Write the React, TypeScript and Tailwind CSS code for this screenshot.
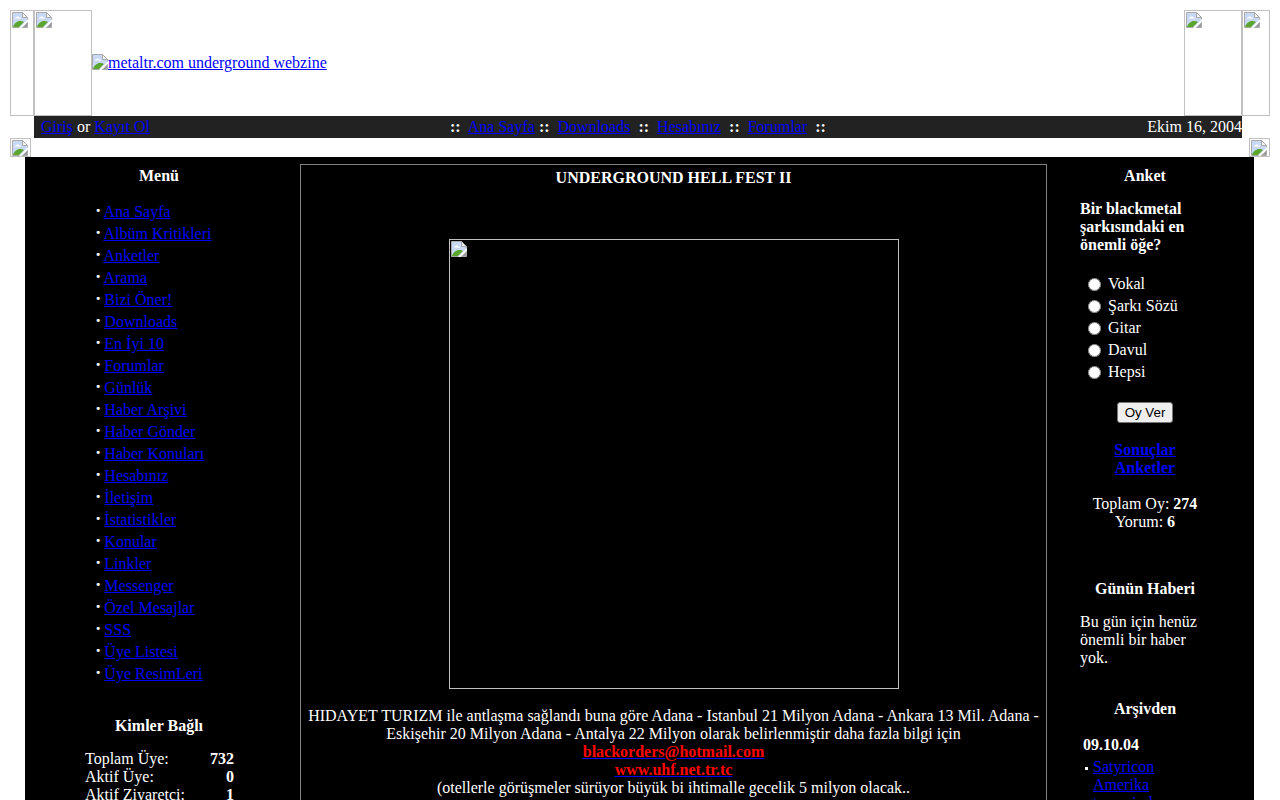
const MENU = [
  "Ana Sayfa",
  "Albüm Kritikleri",
  "Anketler",
  "Arama",
  "Bizi Öner!",
  "Downloads",
  "En İyi 10",
  "Forumlar",
  "Günlük",
  "Haber Arşivi",
  "Haber Gönder",
  "Haber Konuları",
  "Hesabınız",
  "İletişim",
  "İstatistikler",
  "Konular",
  "Linkler",
  "Messenger",
  "Özel Mesajlar",
  "SSS",
  "Üye Listesi",
  "Üye ResimLeri",
];

const POLL = ["Vokal", "Şarkı Sözü", "Gitar", "Davul", "Hepsi"];

const STATS = [
  ["Toplam Üye:", "732"],
  ["Aktif Üye:", "0"],
  ["Aktif Ziyaretçi:", "1"],
];

function BrokenIcon({ className = "" }: { className?: string }) {
  return (
    <svg width="16" height="16" viewBox="0 0 16 16" className={`shrink-0 block ${className}`}>
      <path d="M0.5 0.5H10.5L15.5 5.5V15.5H0.5Z" fill="#c9d9f5" stroke="#a9a9a9" />
      <path d="M10.5 0.5V5.5H15.5Z" fill="#f4f4f4" stroke="#a9a9a9" />
      <path d="M4 5.5C4.5 4 7 4 7.5 5.5H9V6.5H3V5.5Z" fill="#ffffff" />
      <path d="M1 15C2 11.5 5 9 8 9C10 9 11.5 9.5 12 10L7 15Z" fill="#5aa62e" />
      <path d="M7 16L16 7V9.5L9.5 16Z" fill="#ffffff" />
      <path d="M11 15L15 11V15Z" fill="#9a9a9a" />
    </svg>
  );
}

function BrokenBox({ className }: { className: string }) {
  return (
    <div className={`shrink-0 border border-[#c0c0c0] pt-[1px] pl-[1px] ${className}`}>
      <BrokenIcon />
    </div>
  );
}

function A({ children, className = "" }: { children: React.ReactNode; className?: string }) {
  return <a href="#" className={`text-[#0000ff] underline ${className}`}>{children}</a>;
}

function Sep() {
  return <b className="text-white">::</b>;
}

export default function App() {
  return (
    <div className="h-[800px] overflow-hidden bg-white pt-[10px] px-[10px] font-['Liberation_Serif',serif] text-[16px] leading-[18px] text-white">
      <div className="flex h-[106px] items-center">
        <BrokenBox className="self-stretch w-[24px]" />
        <BrokenBox className="self-stretch w-[58px]" />
        <a href="#" className="flex items-center text-[#0000ff] underline">
          <BrokenIcon className="mb-[2px]" />
          metaltr.com underground webzine
        </a>
        <div className="flex-1" />
        <BrokenBox className="self-stretch w-[58px]" />
        <BrokenBox className="self-stretch w-[28px]" />
      </div>

      <div className="ml-[24px] mr-[28px] flex h-[22px] items-center bg-[#222222] pl-[7px]">
        <div className="w-[409px]">
          <A>Giriş</A> or <A>Kayıt Ol</A>
        </div>
        <div className="flex-1 whitespace-pre">
          <Sep />{"  "}<A>Ana Sayfa</A>{" "}<Sep />{"  "}<A>Downloads</A>{"  "}<Sep />{"  "}<A>Hesabınız</A>{"  "}<Sep />{"  "}<A>Forumlar</A>{"  "}<Sep />
        </div>
        <div>Ekim 16, 2004</div>
      </div>

      <div className="flex h-[19px] justify-between">
        <BrokenBox className="w-[21px]" />
        <BrokenBox className="w-[21px]" />
      </div>

      <div className="ml-[15px] mr-[16px] flex h-[643px] bg-black">
        <aside className="w-[275px] shrink-0 pr-[7px] pt-[10px]">
          <h3 className="text-center font-bold">Menü</h3>
          <ul className="mt-[15px] pl-[70px]">
            {MENU.map((item) => (
              <li key={item} className="h-[22px] whitespace-pre leading-[22px]">
                <b className="mr-[-1px] text-[19px]">·</b>{" "}<A>{item}</A>
              </li>
            ))}
          </ul>
          <h3 className="mt-[33px] text-center font-bold">Kimler Bağlı</h3>
          <div className="mt-[15px] ml-[60px] w-[149px]">
            {STATS.map(([label, value]) => (
              <div key={label} className="flex justify-between">
                <span>{label}</span>
                <b>{value}</b>
              </div>
            ))}
          </div>
        </aside>

        <main className="mt-[7px] h-[700px] w-[747px] shrink-0 border border-[#808080] px-[6px] pt-[4px] text-center">
          <h2 className="font-bold">UNDERGROUND HELL FEST II</h2>
          <div className="mx-auto mt-[52px] h-[450px] w-[450px] border border-[#c0c0c0] pl-[1px] pt-[1px]">
            <BrokenIcon />
          </div>
          <p className="mt-[18px]">
            HIDAYET TURIZM ile antlaşma sağlandı buna göre Adana - Istanbul 21 Milyon Adana - Ankara 13 Mil. Adana - Eskişehir 20 Milyon Adana - Antalya 22 Milyon olarak belirlenmiştir daha fazla bilgi için
            <br />
            <a href="#" className="font-bold text-[#ff0000] underline decoration-[#0000ff]">blackorders@hotmail.com</a>
            <br />
            <a href="#" className="font-bold text-[#ff0000] underline decoration-[#0000ff]">www.uhf.net.tr.tc</a>
            <br />
            (otellerle görüşmeler sürüyor büyük bi ihtimalle gecelik 5 milyon olacak..
          </p>
        </main>

        <aside className="flex-1 pt-[10px] pr-[11px]">
          <h3 className="text-center font-bold">Anket</h3>
          <p className="mt-[15px] ml-[33px] font-bold">
            Bir blackmetal<br />şarkısındaki en<br />önemli öğe?
          </p>
          <div className="mt-[19px] ml-[41px]">
            {POLL.map((opt) => (
              <label key={opt} className="flex h-[22px] items-center gap-[7px]">
                <input type="radio" name="poll" className="m-0 h-[13px] w-[13px]" />
                {opt}
              </label>
            ))}
          </div>
          <div className="mt-[19px] flex justify-center">
            <button className="h-[21px] w-[56px] rounded-[3px] border border-[#767676] bg-[#efefef] font-['Liberation_Sans',sans-serif] text-[13.33px] leading-none text-black">
              Oy Ver
            </button>
          </div>
          <div className="mt-[18px] text-center font-bold">
            <A>Sonuçlar</A><br /><A>Anketler</A>
          </div>
          <div className="mt-[18px] text-center">
            Toplam Oy: <b>274</b><br />Yorum: <b>6</b>
          </div>
          <h3 className="mt-[49px] text-center font-bold">Günün Haberi</h3>
          <p className="mt-[15px] ml-[33px] w-[130px]">
            Bu gün için henüz önemli bir haber yok.
          </p>
          <h3 className="mt-[33px] text-center font-bold">Arşivden</h3>
          <b className="mt-[18px] ml-[36px] block">09.10.04</b>
          <div className="mt-[4px] ml-[38px] flex gap-[5px]">
            <span className="mt-[9px] h-[3px] w-[3px] shrink-0 bg-white" />
            <div className="w-[90px]">
              <A>Satyricon Amerika turnesinde</A>
            </div>
          </div>
        </aside>
      </div>
    </div>
  );
}
